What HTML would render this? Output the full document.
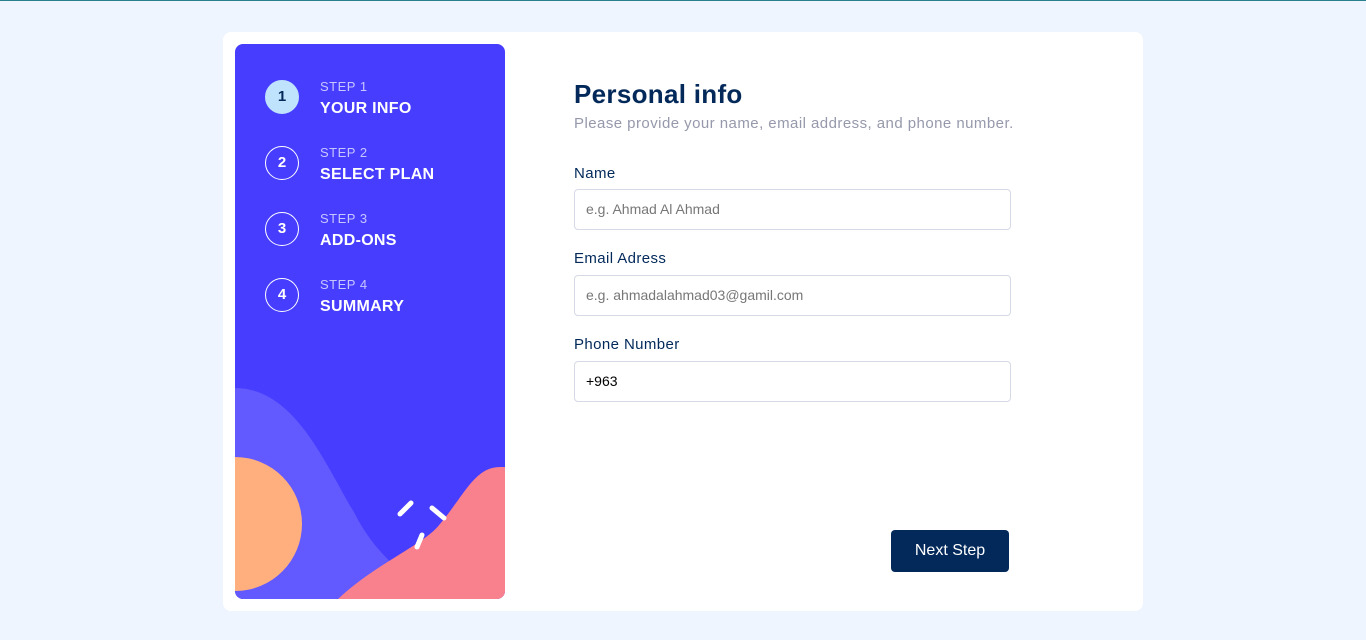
<!DOCTYPE html>
<html><head><style>
body{margin:0;width:1366px;height:640px;background:#eff5fe;font-family:"Liberation Sans",sans-serif;position:relative;overflow:hidden}
.topline{position:absolute;left:0;top:0;width:1366px;height:1px;background:#2a7f8f}
.card{position:absolute;left:223px;top:32px;width:920px;height:579px;background:#fff;border-radius:8px}
.side{position:absolute;left:235px;top:44px;width:270px;height:555px;background:#473dff;border-radius:8px;overflow:hidden}
.step{position:absolute;left:30px;height:40px}
.num{position:absolute;left:0;top:0;width:32px;height:32px;border:1px solid #fff;border-radius:50%;color:#fff;font-weight:bold;font-size:15px;text-align:center;line-height:32px}
.num.a{background:#bfe2fd;border-color:#bfe2fd;color:#02295a}
.lbl{position:absolute;left:55px;top:-1px;color:#c8c6ff;font-size:13px;letter-spacing:.5px;white-space:nowrap}
.t{position:absolute;left:55px;top:20px;color:#fff;font-size:16px;font-weight:bold;letter-spacing:.3px;white-space:nowrap}
h1{position:absolute;left:574px;top:79px;margin:0;font-size:26px;color:#02295a;letter-spacing:.3px}
.sub{position:absolute;left:574px;top:115px;font-size:15px;color:#9699ab;letter-spacing:.45px}
.fl{position:absolute;left:574px;font-size:15px;color:#02295a;letter-spacing:.4px}
.in{position:absolute;left:574px;border:1px solid #d6d9e6;border-radius:4px;font-size:14px;color:#777;line-height:39px;padding-left:11px;box-sizing:border-box;width:437px;height:41px}
.btn{position:absolute;left:891px;top:530px;width:118px;height:42px;background:#02295a;color:#fff;border-radius:4px;font-size:16px;text-align:center;line-height:42px}
</style></head><body>
<div class="topline"></div>
<div class="card"></div>
<div class="side">
<svg width="270" height="555" style="position:absolute;left:0;top:0">
<path d="M0,344 C60,344 90,420 120,470 C140,510 170,530 180,540 L160,555 L0,555Z" fill="#6259ff"/>
<circle cx="0" cy="480" r="67" fill="#ffaf7e"/>
<path d="M103,555 C140,520 190,500 205,480 C230,450 240,423 265,423 L270,423 L270,555Z" fill="#f9818e"/>
<g stroke="#fff" stroke-width="5" stroke-linecap="round"><line x1="165" y1="470" x2="176" y2="459"/><line x1="197" y1="464" x2="209" y2="474"/><line x1="182" y1="503" x2="187" y2="491"/></g>
</svg>
<div class="step" style="top:36px"><div class="num a">1</div><div class="lbl">STEP 1</div><div class="t">YOUR INFO</div></div>
<div class="step" style="top:102px"><div class="num">2</div><div class="lbl">STEP 2</div><div class="t">SELECT PLAN</div></div>
<div class="step" style="top:168px"><div class="num">3</div><div class="lbl">STEP 3</div><div class="t">ADD-ONS</div></div>
<div class="step" style="top:234px"><div class="num">4</div><div class="lbl">STEP 4</div><div class="t">SUMMARY</div></div>
</div>
<h1>Personal info</h1>
<div class="sub">Please provide your name, email address, and phone number.</div>
<div class="fl" style="top:165px">Name</div>
<div class="in" style="top:189px">e.g. Ahmad Al Ahmad</div>
<div class="fl" style="top:250px">Email Adress</div>
<div class="in" style="top:275px">e.g. ahmadalahmad03@gamil.com</div>
<div class="fl" style="top:336px">Phone Number</div>
<div class="in" style="top:361px;color:#000">+963</div>
<div class="btn">Next Step</div>
</body></html>
